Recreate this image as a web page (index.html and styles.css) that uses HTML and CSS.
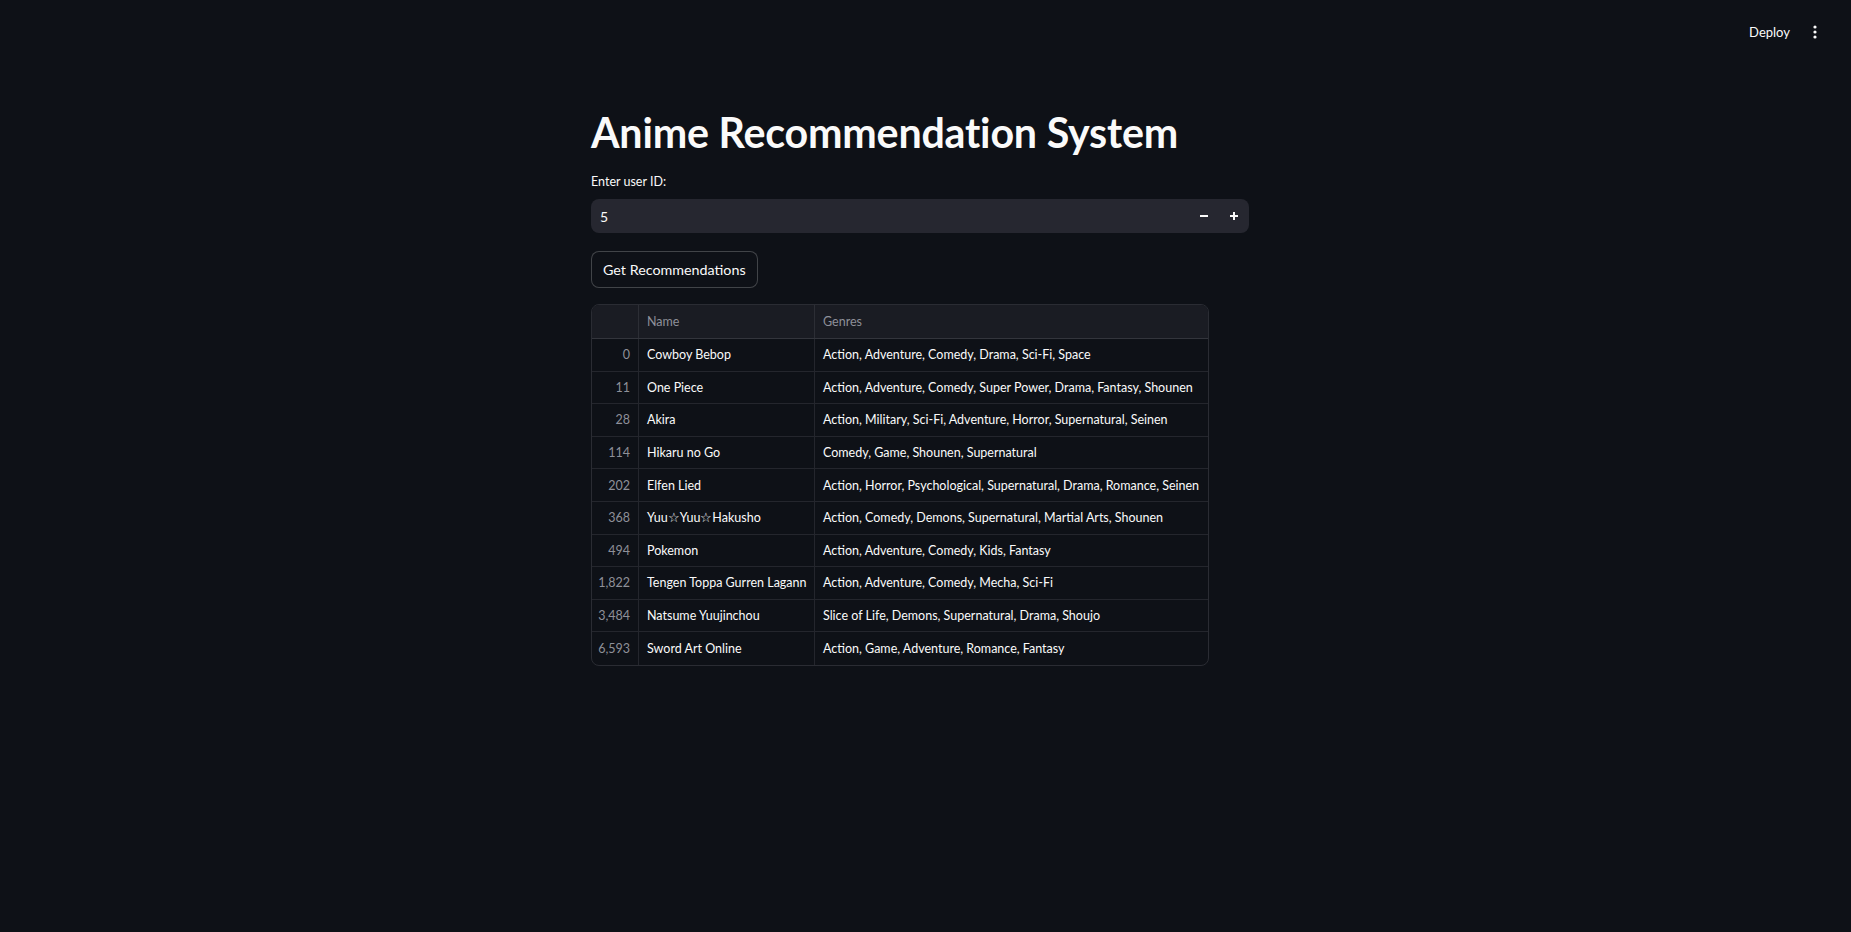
FILE: index.html
```html
<!DOCTYPE html>
<html lang="en">
<head>
<meta charset="utf-8">
<title>Anime Recommendation System</title>
<link rel="stylesheet" href="styles.css">
</head>
<body>
<header class="topbar">
  <button class="deploy">Deploy</button>
  <button class="kebab" aria-label="Main menu">
    <svg width="4" height="14" viewBox="0 0 4 14"><circle cx="2" cy="2" r="1.6" fill="#fafafa"/><circle cx="2" cy="7" r="1.6" fill="#fafafa"/><circle cx="2" cy="12" r="1.6" fill="#fafafa"/></svg>
  </button>
</header>
<main class="page">
  <div class="block">
    <h1 class="title">Anime Recommendation System</h1>
    <label class="label" for="uid">Enter user ID:</label>
    <div class="numinput">
      <input id="uid" class="numfield" type="text" value="5">
      <button class="step" aria-label="decrement">
        <svg width="10" height="10" viewBox="0 0 10 10"><rect x="1" y="4" width="8" height="2" fill="#fafafa"/></svg>
      </button>
      <button class="step" aria-label="increment">
        <svg width="10" height="10" viewBox="0 0 10 10"><rect x="1" y="4" width="8" height="2" fill="#fafafa"/><rect x="4" y="1" width="2" height="8" fill="#fafafa"/></svg>
      </button>
    </div>
    <button class="primary">Get Recommendations</button>
    <div class="grid">
      <div class="row head">
        <div class="cell idx"></div>
        <div class="cell name">Name</div>
        <div class="cell genres">Genres</div>
      </div>
      <div class="row"><div class="cell idx">0</div><div class="cell name">Cowboy Bebop</div><div class="cell genres">Action, Adventure, Comedy, Drama, Sci-Fi, Space</div></div>
      <div class="row"><div class="cell idx">11</div><div class="cell name">One Piece</div><div class="cell genres">Action, Adventure, Comedy, Super Power, Drama, Fantasy, Shounen</div></div>
      <div class="row"><div class="cell idx">28</div><div class="cell name">Akira</div><div class="cell genres">Action, Military, Sci-Fi, Adventure, Horror, Supernatural, Seinen</div></div>
      <div class="row"><div class="cell idx">114</div><div class="cell name">Hikaru no Go</div><div class="cell genres">Comedy, Game, Shounen, Supernatural</div></div>
      <div class="row"><div class="cell idx">202</div><div class="cell name">Elfen Lied</div><div class="cell genres">Action, Horror, Psychological, Supernatural, Drama, Romance, Seinen</div></div>
      <div class="row"><div class="cell idx">368</div><div class="cell name">Yuu☆Yuu☆Hakusho</div><div class="cell genres">Action, Comedy, Demons, Supernatural, Martial Arts, Shounen</div></div>
      <div class="row"><div class="cell idx">494</div><div class="cell name">Pokemon</div><div class="cell genres">Action, Adventure, Comedy, Kids, Fantasy</div></div>
      <div class="row"><div class="cell idx">1,822</div><div class="cell name">Tengen Toppa Gurren Lagann</div><div class="cell genres">Action, Adventure, Comedy, Mecha, Sci-Fi</div></div>
      <div class="row"><div class="cell idx">3,484</div><div class="cell name">Natsume Yuujinchou</div><div class="cell genres">Slice of Life, Demons, Supernatural, Drama, Shoujo</div></div>
      <div class="row last"><div class="cell idx">6,593</div><div class="cell name">Sword Art Online</div><div class="cell genres">Action, Game, Adventure, Romance, Fantasy</div></div>
    </div>
  </div>
</main>
</body>
</html>
```

FILE: styles.css
```css
* { box-sizing: border-box; }
html, body {
  margin: 0;
  padding: 0;
  background: #0e1117;
  color: #fafafa;
  font-family: Lato, "Liberation Sans", sans-serif;
  height: 100%;
}
body { overflow: hidden; }

.topbar {
  height: 64px;
  display: flex;
  justify-content: flex-end;
  align-items: center;
  padding-right: 23px;
  gap: 2px;
}
.deploy {
  background: transparent;
  border: none;
  color: #fafafa;
  font-family: inherit;
  font-size: 13px;
  padding: 4px 10px;
  cursor: pointer;
}
.kebab {
  background: transparent;
  border: none;
  width: 26px;
  height: 30px;
  display: flex;
  align-items: center;
  justify-content: center;
  padding: 0;
}

.page {
  display: flex;
  justify-content: center;
  padding-right: 11px;
}
.block {
  width: 658px;
  display: flex;
  flex-direction: column;
  align-items: flex-start;
  padding-top: 42px;
}
.title {
  margin: 0;
  font-size: 41.2px;
  font-weight: 700;
  line-height: 52px;
  letter-spacing: -0.2px;
  color: #fafafa;
}
.label {
  margin-top: 14px;
  font-size: 12.5px;
  line-height: 20px;
  color: #fafafa;
}
.numinput {
  margin-top: 7px;
  width: 100%;
  height: 34px;
  background: #262730;
  border-radius: 8px;
  display: flex;
  align-items: center;
}
.numfield {
  flex: 1;
  height: 100%;
  background: transparent;
  border: none;
  outline: none;
  color: #fafafa;
  font-family: inherit;
  font-size: 14px;
  padding: 0 9px;
}
.step {
  width: 30px;
  height: 34px;
  background: transparent;
  border: none;
  display: flex;
  align-items: center;
  justify-content: center;
  padding: 0;
}

.primary {
  margin-top: 18px;
  height: 37px;
  padding: 0 11px;
  background: #0e1117;
  border: 1px solid rgba(250, 250, 250, 0.22);
  border-radius: 8px;
  color: #fafafa;
  font-family: inherit;
  font-size: 14.3px;
}

.grid {
  margin-top: 16px;
  width: 618px;
  border: 1px solid #2a2c33;
  border-radius: 8px;
  overflow: hidden;
  font-size: 12.5px;
}
.row {
  display: flex;
  height: 32.6px;
  border-bottom: 1px solid #24262d;
}
.row.last { border-bottom: none; }
.row.head {
  height: 34px;
  background: #1a1c23;
  border-bottom: 1px solid #33353c;
  color: #8e9099;
}
.cell {
  display: flex;
  align-items: center;
  padding: 0 8px;
  white-space: nowrap;
  overflow: hidden;
}
.cell.idx {
  width: 47px;
  justify-content: flex-end;
  border-right: 1px solid #24262d;
  color: #8e9099;
}
.row.head .cell.idx, .row.head .cell.name { border-right: 1px solid #2c2e35; }
.cell.name {
  width: 176px;
  border-right: 1px solid #24262d;
}
.cell.genres { flex: 1; }
```
